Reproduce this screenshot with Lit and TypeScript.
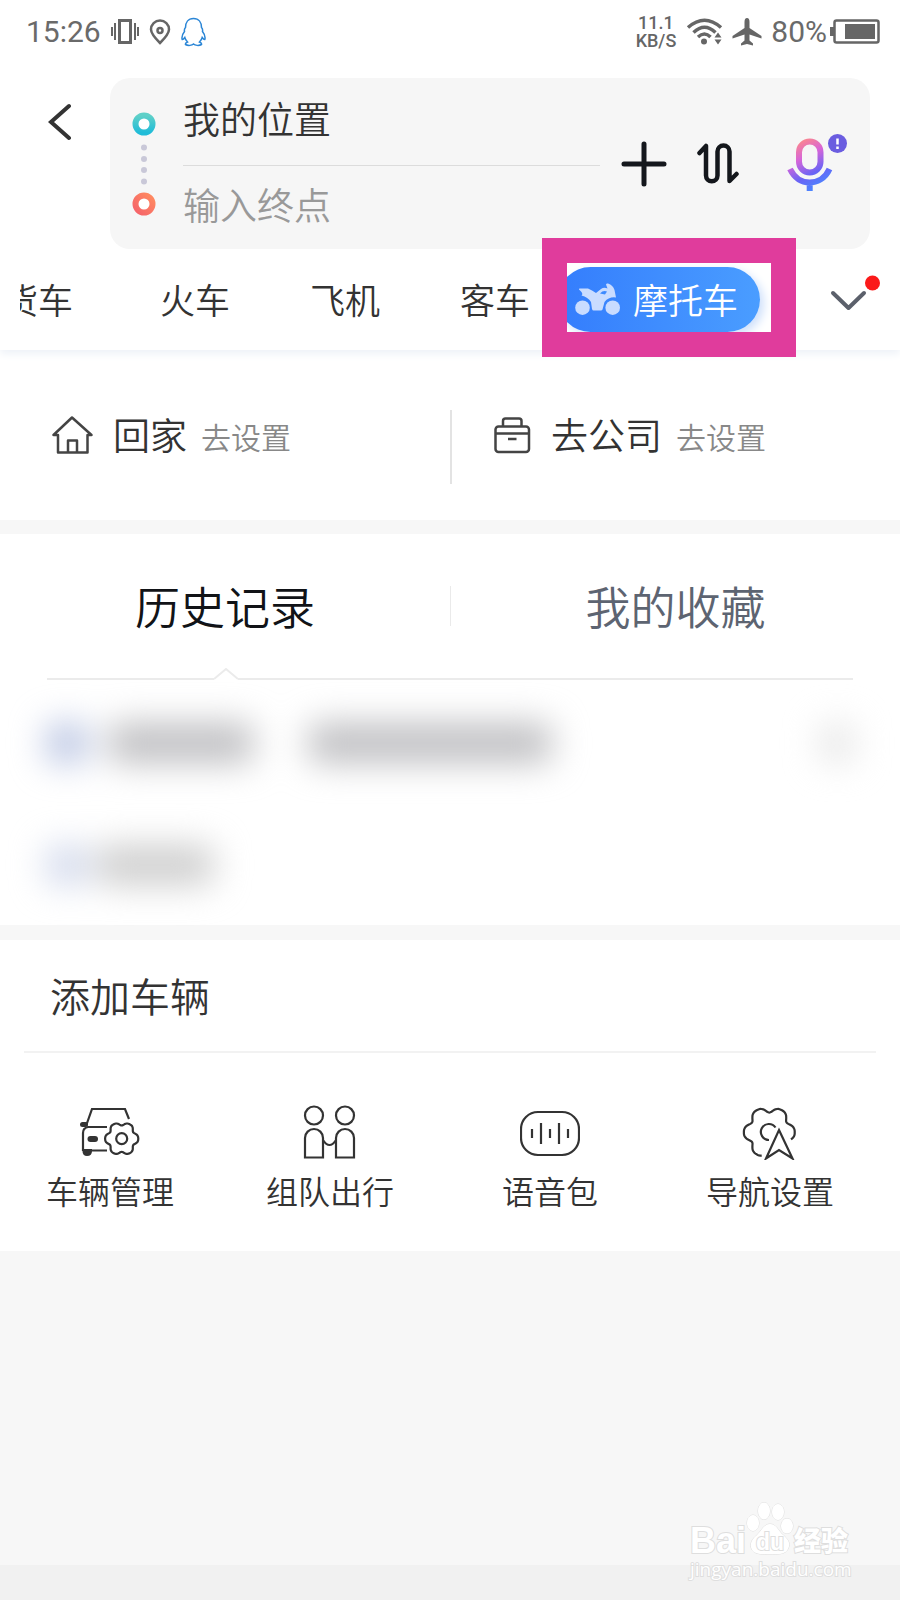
import { LitElement, html, svg, css } from "lit";
import { customElement, state } from "lit/decorators.js";

/** Outline of a six-lobed cog, sampled between two angles given in degrees. */
function cog(cx: number, cy: number, r: number, amp: number, from: number, to: number): string {
  const pts: string[] = [];
  for (let a = from; a <= to; a += 3) {
    const t = (a * Math.PI) / 180;
    const rad = r + amp * Math.cos(6 * t) - amp * 0.2 * Math.cos(12 * t);
    pts.push(`${(cx + rad * Math.cos(t)).toFixed(1)} ${(cy + rad * Math.sin(t)).toFixed(1)}`);
  }
  return "M" + pts.join("L");
}

const carIcon = svg`
  <path d="M6 22L12 5H45L49 15M27 23H8Q3 24 3 29V47M11 46.500H27"/>
  <rect x="0" y="18" width="8" height="5" rx="2.500" class="solid"/>
  <rect x="7.500" y="32" width="10.500" height="6" rx="3" class="solid"/>
  <path d="M2.500 45H12V47Q12 52 7 52Q2.500 52 2.500 47Z" class="solid"/>
  <path d="${cog(41.7, 34.7, 15.2, 1.7, 0, 360)}Z"/>
  <circle cx="41.700" cy="34.700" r="5.500"/>`;

const teamIcon = svg`
  <circle cx="14" cy="11.500" r="9"/><circle cx="45" cy="11.500" r="9"/>
  <path d="M5 53.500V34a9 9 0 0 1 18 0V53.500ZM36 53.500V34a9 9 0 0 1 18 0V53.500ZM23 36q6.500 10 13 0"/>`;

const voiceIcon = svg`
  <rect x="1" y="8" width="58" height="43" rx="17"/>
  <path d="M12 25v9M21 19v21M30 25v9M39 19v21M48 25v9"/>`;

const naviIcon = svg`
  <path d="${cog(29.3, 28.3, 23.2, 2.8, 108, 378)}"/>
  <path d="M35.500 23.500A8 8 0 1 0 29 36"/>
  <path d="M39 26L52.500 54.500L39 46L26 54.500Z"/>`;

@customElement("app-root")
export class AppRoot extends LitElement {
  static styles = css`
    :host {
      display: flex;
      flex-direction: column;
      position: relative;
      min-height: 100vh;
      overflow: hidden;
      background: #f7f7f7;
      color: #333;
      font-family: "Noto Sans CJK SC", "Noto Sans", sans-serif;
      font-weight: 350;
    }
    * { box-sizing: border-box; }
    button, input {
      margin: 0;
      padding: 0;
      border: 0;
      background: none;
      color: inherit;
      font: inherit;
      outline: none;
    }
    button { cursor: pointer; white-space: nowrap; }
    svg { display: block; flex: none; fill: none; }
    .solid { fill: #333; stroke: none; }

    .status {
      display: flex;
      align-items: center;
      height: 64px;
      padding: 0 20px 0 26px;
      font: 400 30px/36px Roboto, sans-serif;
      color: #6a6a6a;
    }
    .status-left, .status-right { display: flex; align-items: center; }
    .status-left { gap: 9px; }
    .status-right { margin-left: auto; gap: 9px; }
    .speed {
      display: flex;
      flex-direction: column;
      font-weight: 500;
      font-size: 18px;
      line-height: 18px;
      color: #666;
      text-align: center;
    }
    .charge { display: flex; align-items: center; gap: 2px; }

    .top {
      background: #fff;
      box-shadow: 0 4px 8px #eef2f8;
      position: relative;
    }
    .search { display: flex; padding: 14px 30px 0 0; }
    .back { width: 110px; height: 88px; padding-left: 48px; }
    .card {
      flex: 1;
      min-width: 0;
      display: flex;
      align-items: center;
      padding: 0 22px;
      border-radius: 20px;
      background: #f6f6f6;
    }
    .fields { flex: 1; min-width: 0; margin-left: 27px; }
    .field { display: block; }
    .field + .field { border-top: 1px solid #dcdcdc; }
    .field input {
      display: block;
      width: 100%;
      height: 83px;
      padding-bottom: 8px;
      font-size: 37px;
      line-height: 48px;
    }
    .field:first-child input { height: 87px; }
    .field input::placeholder { color: #999; opacity: 1; }
    .actions { display: flex; align-items: center; margin-left: 21px; }
    .actions button + button { margin-left: 30px; }
    .actions button:last-child { margin-left: 46px; }

    .modes {
      display: flex;
      align-items: center;
      height: 101px;
      padding: 0 18px 0 20px;
      font-size: 35px;
      line-height: 48px;
    }
    .peek {
      display: flex;
      justify-content: flex-end;
      width: 53px;
      overflow: hidden;
    }
    .peek button, .group button { padding-bottom: 2px; }
    .group { display: flex; gap: 80px; margin: 0 28px 0 87px; }
    .pill {
      position: relative;
      display: flex;
      align-items: center;
      gap: 12px;
      height: 65px;
      padding: 0 22px 2px 17px;
      border-radius: 33px;
      background: linear-gradient(90deg, #347dfd, #4a9dff);
      box-shadow: 4px 4px 10px #cfe0fb;
      color: #fff;
    }
    .marker {
      position: absolute;
      inset: -29px -36px -25px -16px;
      border: 25px solid #e03c9c;
      pointer-events: none;
    }
    .more { margin-left: auto; }

    .places {
      display: grid;
      grid-template-columns: 1fr 1fr;
      padding: 60px 0 36px;
      background: #fff;
    }
    .place {
      display: flex;
      align-items: center;
      height: 74px;
      padding: 0 0 24px 52px;
      font-size: 37px;
      line-height: 46px;
    }
    .place + .place { padding-left: 42px; border-left: 2px solid #e3e3e3; }
    .place span { margin-left: 20px; padding-bottom: 2px; }
    .place small {
      margin-left: 14px;
      padding-top: 2px;
      font-size: 30px;
      color: #888;
    }

    .records { margin-top: 14px; background: #fff; }
    .record-tabs {
      display: grid;
      grid-template-columns: 1fr 1fr;
      align-items: center;
      height: 144px;
      font-size: 45px;
    }
    .record-tab { height: 40px; line-height: 38px; color: #5d6471; }
    .record-tab + .record-tab { border-left: 1px solid #eaeaea; }
    .record-tab.on { color: #111317; }
    .rule { display: flex; height: 12px; margin: -10px 47px 0; }
    .rule i { border-bottom: 2px solid #ebebeb; flex: 1; }
    .rule i:first-child { flex: none; width: calc(25vw - 58px); }
    .hidden-rows {
      display: flex;
      flex-direction: column;
      gap: 82px;
      height: 245px;
      padding: 43px 46px 0;
    }
    .hidden-row { display: flex; height: 40px; filter: blur(17px); }
    .smudge { background: #bfbfc2; border-radius: 12px; }
    .smudge.tag { width: 42px; background: #b9c4e2; }
    .smudge.a { width: 146px; margin-left: 20px; }
    .smudge.b { width: 244px; margin-left: 54px; }
    .smudge.c { width: 34px; margin-left: auto; background: #e6e6e6; }
    .faint .smudge { background: #cecece; }
    .faint .smudge.tag { background: #d2d9ec; }
    .faint .smudge.a { width: 118px; margin-left: 8px; }

    .vehicle { margin-top: 15px; background: #fff; }
    .vehicle h2 {
      margin: 0 24px;
      padding: 0 26px;
      height: 113px;
      border-bottom: 2px solid #f2f2f2;
      font-size: 40px;
      font-weight: inherit;
      line-height: 111px;
    }
    .tools {
      display: grid;
      grid-template-columns: repeat(4, 1fr);
      height: 198px;
      padding: 51px 20px 0 0;
    }
    .tool {
      display: flex;
      flex-direction: column;
      align-items: center;
      gap: 8px;
      height: 108px;
      font-size: 32px;
      line-height: 44px;
    }
    .tool svg { stroke: #333; stroke-width: 2.2; }

    .bottom { height: 35px; margin-top: auto; background: #f1f1f1; }
    .watermark {
      position: absolute;
      right: 50px;
      bottom: 18px;
      width: 160px;
      color: #fff;
      -webkit-text-stroke: 2px #dedede;
      paint-order: stroke fill;
    }
    .brand { display: flex; align-items: flex-end; height: 56px; white-space: nowrap; }
    .brand b { font: 700 36px/30px "Liberation Sans", sans-serif; }
    .brand strong { font-weight: 900; font-size: 27px; line-height: 32px; }
    .paw { position: relative; }
    .paw span {
      position: absolute;
      inset: auto 0 0;
      text-align: center;
      font: 700 23px/28px "Liberation Sans", sans-serif;
    }
    .site { display: block; font: 400 19px/26px "Open Sans", sans-serif; white-space: nowrap; }
  `;

  @state() private record = 0;
  @state() private target = "";

  private tools = [
    { label: "车辆管理", icon: carIcon },
    { label: "组队出行", icon: teamIcon },
    { label: "语音包", icon: voiceIcon },
    { label: "导航设置", icon: naviIcon },
  ];

  private statusBar() {
    return html`<div class="status">
      <div class="status-left">
        <span>15:26</span>
        <svg width="29" height="28" stroke="#666" stroke-width="2">
          <rect x="9.500" y="2.500" width="11" height="22" stroke-width="3"/>
          <path d="M5 5v17M2 9v9M25 5v17M28 9v9"/>
        </svg>
        <svg width="24" height="28" stroke="#666" stroke-width="2.500">
          <path d="M12 25C5 18 3 15 3 11.500a9 9 0 0 1 18 0C21 15 19 18 12 25Z"/>
          <circle cx="12" cy="12.500" r="2.500"/>
        </svg>
        <svg width="26" height="30" stroke="#2b86d6" stroke-width="1.500">
          <path d="M12.500 1.500C7 1.500 4.500 5.500 4.500 10.500Q3 12 3.500 14.500C1.500 17 .5 20 1.200 22.500Q2 23 3.800 20.500Q4.500 23 6.500 25Q4 26 4.500 27.500C7 29 11 28.500 12.500 27C14 28.500 18 29 20.500 27.500Q21 26 18.500 25Q20.500 23 21.200 20.500Q23 23 23.800 22.500C24.500 20 23.500 17 21.500 14.500Q22 12 20.500 10.500C20.500 5.500 18 1.500 12.500 1.500Z"/>
        </svg>
      </div>
      <div class="status-right">
        <div class="speed"><span>11.1</span><span>KB/S</span></div>
        <svg width="38" height="30" stroke="#666" stroke-width="3.500">
          <path d="M3 10.500Q19.500-4 36 10.500M8.500 15.500Q19.500 5 30.500 15.500M13 20Q19.500 14 25.500 20"/>
          <g fill="#666" stroke="none"><circle cx="19" cy="24.500" r="3"/><path d="M33 15.500l3.500 5h-7zM33 27.500l3.500-5h-7z"/></g>
        </svg>
        <svg width="30" height="30">
          <path fill="#666" d="M15 1Q17.500 1 17.500 5V11L29.500 19V21.500L17.500 17.500V23.500L21 26.500V28.500L15 27L9 28.500V26.500L12.500 23.500V17.500L.5 21.500V19L12.500 11V5Q12.500 1 15 1Z"/>
        </svg>
        <span class="charge">80%
          <svg width="51" height="28">
            <rect x="5.500" y="2.500" width="44" height="22" rx="2" stroke="#666" stroke-width="2.500"/>
            <path d="M1 9h4v9h-4zM16 6h30v15h-30z" fill="#666"/>
          </svg>
        </span>
      </div>
    </div>`;
  }

  private searchCard() {
    return html`<div class="search">
      <button class="back" aria-label="返回">
        <svg width="26" height="40" stroke="#333" stroke-width="4" stroke-linecap="round"><path d="M21 4L3 20L21 36"/></svg>
      </button>
      <div class="card">
        <svg width="24" height="104">
          <defs>
            <linearGradient id="go" x1="0" y1="0" x2="0" y2="1"><stop stop-color="#5fd0c8"/><stop offset="1" stop-color="#20bcd8"/></linearGradient>
            <linearGradient id="end" x1="1" y1="0" x2="0" y2="1"><stop stop-color="#ff8a60"/><stop offset="1" stop-color="#f5636a"/></linearGradient>
          </defs>
          <circle cx="12" cy="12" r="8.500" stroke="url(#go)" stroke-width="6" fill="#fff"/>
          <circle cx="12" cy="92" r="8.500" stroke="url(#end)" stroke-width="6" fill="#fff"/>
          <g fill="#c9c8d8"><circle cx="12" cy="35.500" r="3"/><circle cx="12" cy="47" r="3"/><circle cx="12" cy="58" r="3"/><circle cx="12" cy="69.500" r="3"/></g>
        </svg>
        <div class="fields">
          <label class="field"><input aria-label="起点" .value=${"我的位置"}></label>
          <label class="field"><input aria-label="终点" placeholder="输入终点" .value=${this.target}
            @input=${(e: InputEvent) => (this.target = (e.target as HTMLInputElement).value)}></label>
        </div>
        <div class="actions">
          <button aria-label="添加途经点">
            <svg width="46" height="46" stroke="#14171c" stroke-width="5" stroke-linecap="round"><path d="M3 23H43M23 3V43"/></svg>
          </button>
          <button aria-label="交换起终点">
            <svg width="43" height="43" stroke="#14171c" stroke-width="4.500" stroke-linecap="round" stroke-linejoin="round">
              <path d="M2.500 11L9 4V33.500a5.750 5.750 0 0 0 11.500 0V9.500a6 6 0 0 1 12 0V39L39.500 32"/>
            </svg>
          </button>
          <button aria-label="语音输入">
            <svg width="62" height="60">
              <defs><linearGradient id="mic" gradientUnits="userSpaceOnUse" x1="12" y1="6" x2="36" y2="52">
                <stop stop-color="#ff8a86"/><stop offset=".35" stop-color="#d765d8"/><stop offset=".7" stop-color="#6a63f5"/><stop offset="1" stop-color="#4a86ff"/>
              </linearGradient></defs>
              <g stroke="url(#mic)" stroke-width="6">
                <rect x="13" y="7.500" width="21.500" height="31" rx="10.750"/>
                <path d="M4 35C9 45 17 48.500 23.700 48.500S39 45 43.500 35M23.700 48V57"/>
              </g>
              <circle cx="51.500" cy="9.500" r="9.500" fill="#6b5de0"/>
              <path d="M51.500 4.500v6M51.500 12.500v2.500" stroke="#fff" stroke-width="2.500"/>
            </svg>
          </button>
        </div>
      </div>
    </div>`;
  }

  private modeBar() {
    return html`<nav class="modes" aria-label="出行方式">
      <div class="peek"><button>货车</button></div>
      <div class="group">${["火车", "飞机", "客车"].map((m) => html`<button>${m}</button>`)}</div>
      <button class="pill" aria-current="true">
        <svg width="46" height="34">
          <g fill="#c9dcff">
            <circle cx="7.500" cy="25.700" r="7.300"/><circle cx="37.700" cy="25.700" r="7.300"/>
            <path d="M4 7.500Q3.500 6.500 5 6.500L13 6.500Q17 8 21 11L26 7Q29 5 32.500 6.500L31 2.500Q31.500 1 33 1.500Q38 3 39.500 8L41 15.500Q34 14.500 29.500 20L27.500 27.500Q27 28.500 26 28.500H18.500Q17.500 28.500 17 27L16 20Q13 15 6.500 13.500Q9 11.500 4 7.500Z"/>
          </g>
          <path d="M25 11.500Q28 8 32 9.500L30 12.500Z" fill="#3d8afe"/>
        </svg>
        摩托车
        <span class="marker"></span>
      </button>
      <button class="more" aria-label="更多">
        <svg width="52" height="50">
          <path d="M3 18L18.500 33L34 18" stroke="#5b606b" stroke-width="4" stroke-linecap="round" stroke-linejoin="round"/>
          <circle cx="42.500" cy="8" r="7.500" fill="#fb1a1a"/>
        </svg>
      </button>
    </nav>`;
  }

  render() {
    return html`
      <header class="top">${this.statusBar()}${this.searchCard()}${this.modeBar()}</header>

      <section class="places">
        <button class="place">
          <svg width="41" height="40" stroke="#444" stroke-width="2.500" stroke-linejoin="round">
            <path d="M20 2.500L1.500 20H6V37.500H35.500V20H39.500ZM16 37V25.500H25V37"/>
          </svg>
          <span>回家</span><small>去设置</small>
        </button>
        <button class="place">
          <svg width="37" height="38" stroke="#444" stroke-width="2.500">
            <rect x="1.500" y="10.500" width="33.500" height="25.500" rx="3"/>
            <path d="M9 10V5Q9 2.500 11.500 2.500H25Q27.500 2.500 27.500 5V10M2 17.500H35M14 23H22.500"/>
          </svg>
          <span>去公司</span><small>去设置</small>
        </button>
      </section>

      <section class="records">
        <div class="record-tabs" role="tablist">
          ${["历史记录", "我的收藏"].map((t, i) => html`<button role="tab" aria-selected=${this.record === i}
            class="record-tab ${this.record === i ? "on" : ""}" @click=${() => (this.record = i)}>${t}</button>`)}
        </div>
        <div class="rule"><i></i><svg width="24" height="12" stroke="#ebebeb" stroke-width="2"><path d="M0 11L12 1L24 11"/></svg><i></i></div>
        <div class="hidden-rows" aria-hidden="true">
          <div class="hidden-row"><div class="smudge tag"></div><div class="smudge a"></div><div class="smudge b"></div><div class="smudge c"></div></div>
          <div class="hidden-row faint"><div class="smudge tag"></div><div class="smudge a"></div></div>
        </div>
      </section>

      <section class="vehicle">
        <h2>添加车辆</h2>
        <div class="tools">
          ${this.tools.map((t) => html`<button class="tool"><svg width="60" height="56">${t.icon}</svg>${t.label}</button>`)}
        </div>
      </section>

      <footer class="bottom"></footer>
      <div class="watermark">
        <div class="brand">
          <b>Bai</b>
          <div class="paw">
            <svg width="48" height="56" viewBox="1 0 48 56">
              <g fill="#fff" stroke="#dedede">
                <ellipse cx="8" cy="23" rx="6" ry="8"/><ellipse cx="19" cy="11" rx="6" ry="8.500"/>
                <ellipse cx="33" cy="12" rx="6" ry="8"/><ellipse cx="42" cy="26" rx="6" ry="7.500"/>
                <path d="M25 24C31 24 33 30 37 34C43 39 46 43 43 49C40 55 32 54 25 54S11 55 7 50C4 44 7 39 12 35C17 30 19 24 25 24Z"/>
              </g>
            </svg>
            <span>du</span>
          </div>
          <strong>经验</strong>
        </div>
        <span class="site">jingyan.baidu.com</span>
      </div>
    `;
  }
}
